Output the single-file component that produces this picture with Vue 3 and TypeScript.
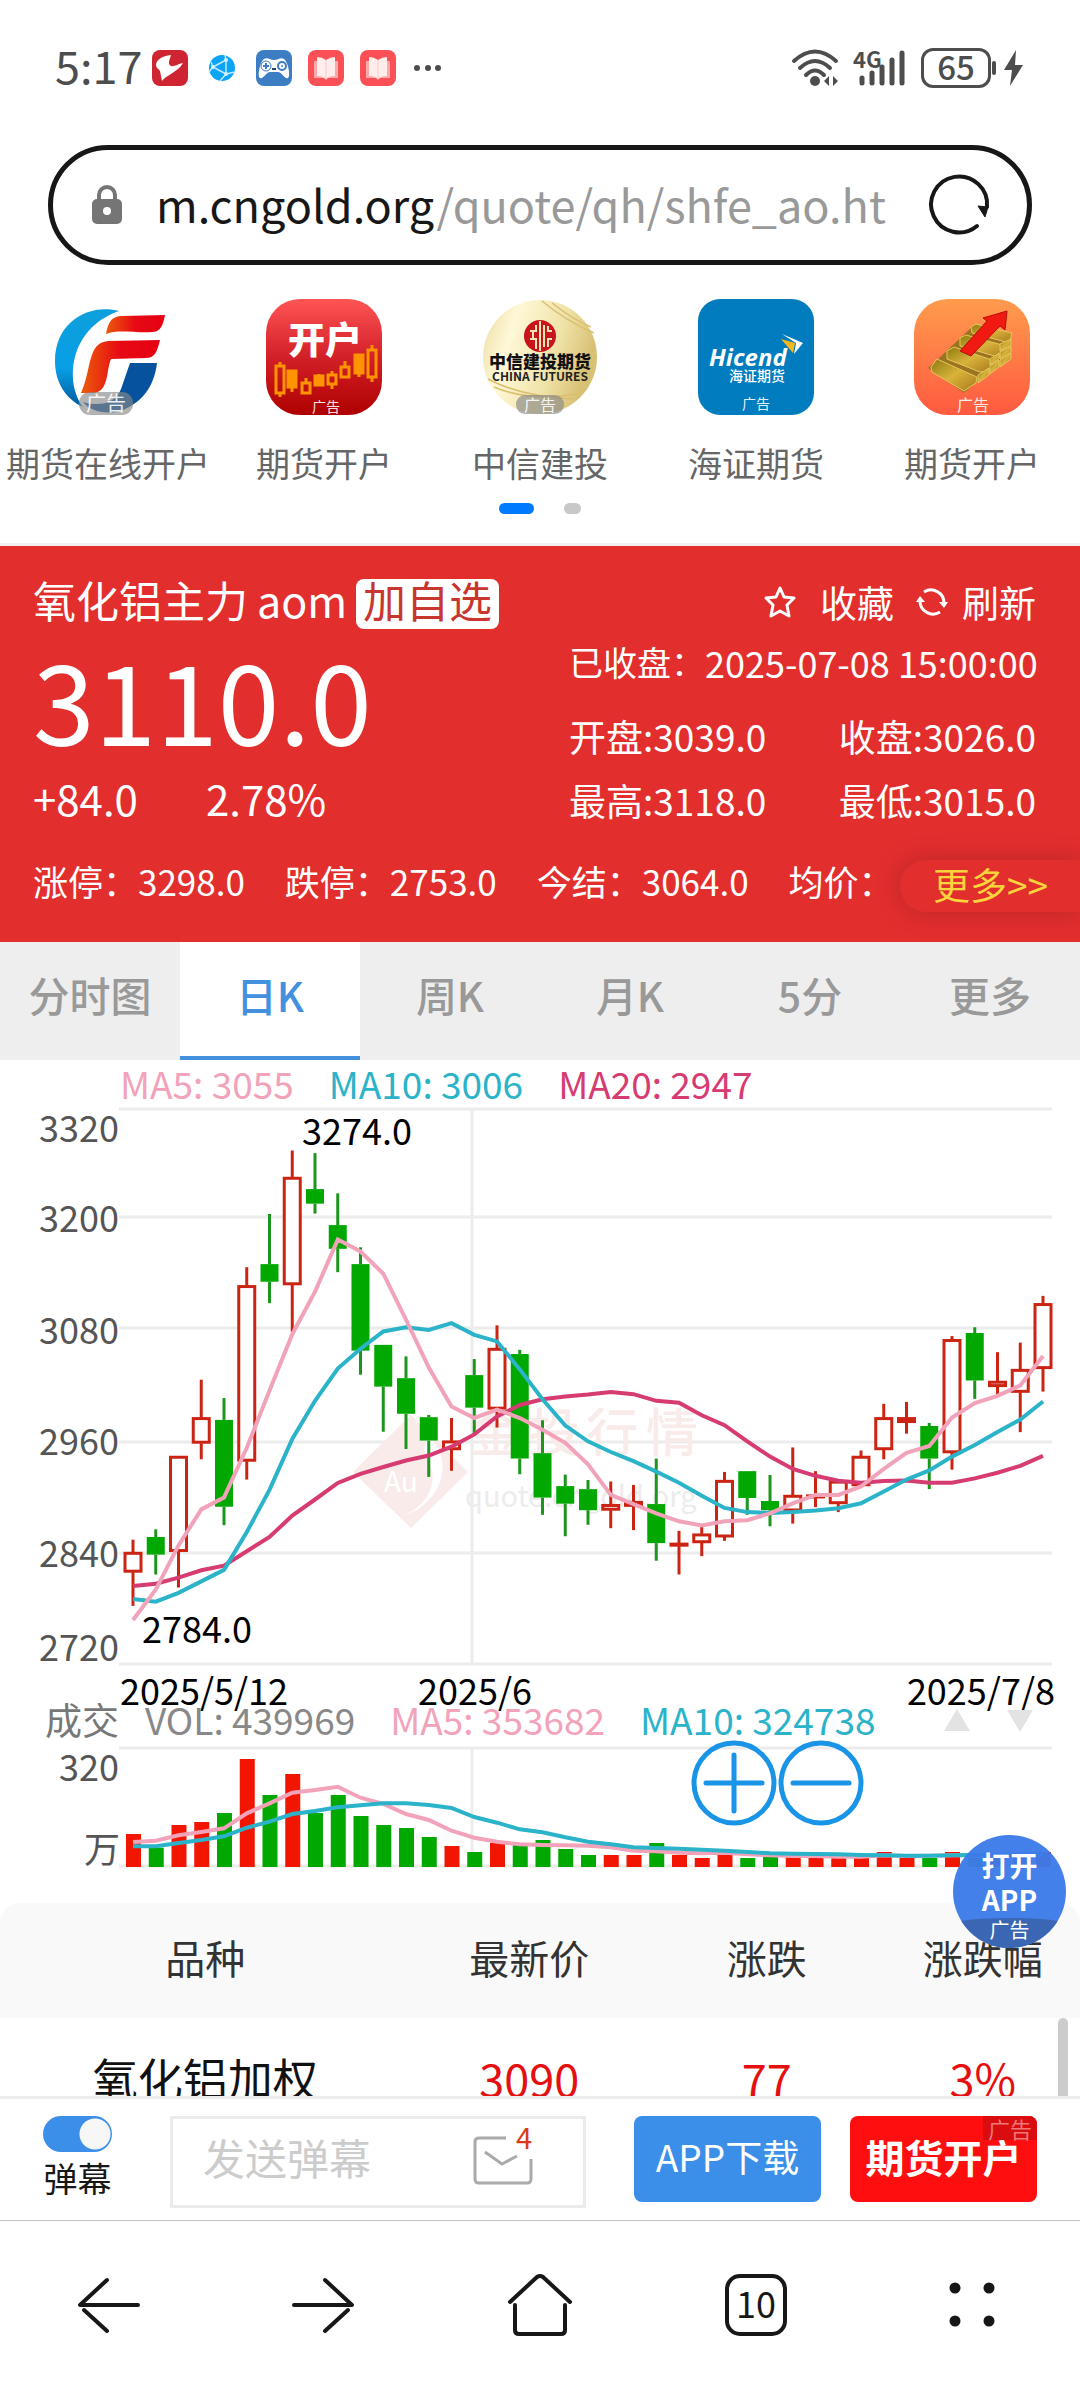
<script setup lang="ts">
import { ref } from 'vue'

type Candle = [kind: 'up' | 'down', high: number, top: number, bottom: number, low: number]

// Chart geometry: every series shares the same horizontal step.
const FIRST_X = 133
const STEP = 22.75
const px = (i: number): number => FIRST_X + STEP * i
const priceY = (v: number): number => v * 0.3827 - 16
const volY = (v: number): number => v / 3 - 86

const candles: Candle[] = [
  ['up', 1175, 1208, 1260, 1348], ['down', 1148, 1168, 1214, 1266], ['up', 957, 957, 1206, 1300],
  ['up', 757, 856, 923, 965], ['down', 805, 862, 1089, 1137], ['up', 463, 511, 970, 1018],
  ['down', 324, 455, 501, 557], ['up', 158, 228, 509, 632], ['down', 165, 259, 297, 323],
  ['down', 270, 353, 415, 476], ['down', 411, 455, 681, 744], ['down', 666, 666, 775, 893],
  ['down', 696, 753, 846, 938], ['down', 849, 855, 916, 1011], ['up', 857, 917, 940, 995],
  ['down', 703, 745, 830, 900], ['up', 615, 675, 834, 882], ['down', 679, 690, 963, 1004],
  ['down', 863, 949, 1065, 1110], ['down', 1005, 1035, 1081, 1166], ['down', 1019, 1043, 1098, 1136],
  ['up', 1023, 1083, 1098, 1145], ['up', 1032, 1075, 1088, 1150], ['down', 963, 1082, 1184, 1230],
  ['up', 1152, 1184, 1192, 1266], ['up', 1140, 1160, 1183, 1218], ['up', 998, 1020, 1168, 1178],
  ['down', 996, 996, 1066, 1110], ['down', 1006, 1074, 1098, 1140], ['up', 934, 1059, 1100, 1133],
  ['up', 996, 1058, 1066, 1090], ['up', 1022, 1022, 1081, 1103], ['up', 942, 957, 1034, 1034],
  ['up', 820, 856, 940, 965], ['up', 815, 856, 869, 898], ['down', 870, 878, 963, 1043],
  ['up', 643, 652, 948, 992], ['down', 620, 635, 759, 807], ['up', 685, 761, 775, 797],
  ['up', 660, 730, 790, 894], ['up', 538, 558, 728, 788],
]

const ma5 = [1385, 1305, 1190, 1096, 1065, 935, 785, 638, 527, 391, 422, 480, 600, 725, 827, 857, 835, 857, 888, 922, 978, 1058, 1082, 1106, 1127, 1138, 1127, 1124, 1106, 1080, 1058, 1058, 1036, 990, 948, 930, 856, 818, 799, 772, 695]
const ma10 = [1330, 1337, 1314, 1284, 1254, 1155, 1045, 912, 812, 728, 676, 631, 620, 627, 609, 640, 657, 730, 808, 877, 918, 946, 970, 997, 1026, 1060, 1092, 1103, 1105, 1103, 1099, 1093, 1080, 1049, 1018, 994, 958, 928, 894, 861, 814]
const ma20 = [1296, 1290, 1274, 1255, 1243, 1205, 1168, 1112, 1070, 1027, 1003, 985, 968, 955, 932, 900, 853, 823, 808, 801, 796, 789, 795, 812, 817, 850, 876, 918, 958, 990, 1008, 1021, 1026, 1022, 1020, 1026, 1026, 1015, 1000, 982, 956]

const volumes = [522, 563, 495, 486, 459, 297, 405, 342, 459, 405, 468, 495, 504, 531, 558, 576, 549, 553, 540, 567, 585, 585, 585, 549, 585, 594, 582, 594, 590, 590, 594, 594, 594, 576, 594, 594, 576, 594, 594, 594, 576]
const volMa5 = [546, 542, 526, 516, 505, 460, 430, 398, 390, 380, 413, 432, 462, 480, 512, 533, 545, 553, 555, 556, 557, 562, 572, 574, 578, 580, 578, 583, 586, 588, 588, 590, 590, 586, 588, 587, 586, 586, 586, 586, 586]
const volMa10 = [559, 559, 549, 540, 529, 503, 485, 462, 453, 442, 436, 430, 430, 435, 444, 471, 488, 508, 517, 532, 545, 553, 562, 564, 566, 569, 572, 576, 580, 581, 582, 583, 585, 586, 587, 587, 586, 585, 584, 584, 583]

const line = (values: number[], y: (v: number) => number): string =>
  values.map((v, i) => `${px(i).toFixed(1)},${y(v).toFixed(1)}`).join(' ')

const priceGrid = [3, 111, 222, 336, 447, 558]
const priceLabels: [string, number][] = [
  ['3320', 36], ['3200', 126], ['3080', 238], ['2960', 349], ['2840', 461], ['2720', 555],
]

const tabs = ['分时图', '日K', '周K', '月K', '5分', '更多']
const activeTab = ref('日K')
const danmu = ref(true)
const message = ref('')

const limits: [string, string][] = [
  ['涨停：', '3298.0'], ['跌停：', '2753.0'], ['今结：', '3064.0'], ['均价：', ''],
]

// Orange candles inside the second advert icon: x, wick top, wick bottom, body top, body bottom, filled
const adCandles: [number, number, number, number, number, boolean][] = [
  [14, 63, 98, 67, 94, false], [26, 72, 93, 72, 88, true], [40, 79, 94, 84, 94, false],
  [53, 75, 86, 77, 86, true], [66, 72, 90, 76, 85, false], [79, 62, 78, 68, 78, false],
  [93, 56, 78, 56, 74, true], [106, 46, 83, 51, 78, false],
]
</script>

<template>
  <div class="screen">
    <div class="status">
      <div class="status-side">
        <span class="clock">5:17</span>
        <svg class="app-ic first" viewBox="0 0 36 36"><rect width="36" height="36" rx="8" fill="#cf2431" /><path d="M19 5 C10 6 4 10 4 15 C4 18 7 19 8 21 L10 31 C13 26 26 22 31 13 C26 14 22 17 19 16 C15 14 18 9 19 5Z" fill="#fff" /></svg>
        <svg class="app-ic" viewBox="0 0 36 36"><circle cx="18" cy="18" r="13" fill="#0ba5f8" /><path d="M9 17 L22 10 M9 17 L22 24 M22 10 V24 M9 17 L5 22 M22 10 L21 5 M22 24 L16 31 M22 24 L31 22 M9 17 L7 12" stroke="#bfe6fb" stroke-width="1.5" fill="none" /><g fill="#d5effc"><circle cx="9" cy="17" r="2" /><circle cx="22" cy="10" r="2" /><circle cx="22" cy="24" r="2" /></g></svg>
        <svg class="app-ic" viewBox="0 0 36 36"><rect width="36" height="36" rx="8" fill="#3c7dc4" /><path d="M8 9 C12 7 13 10 18 10 C23 10 24 7 28 9 C32 12 35 26 32 28 C29 30 26 22 22 22 H14 C10 22 7 30 4 28 C1 26 4 12 8 9Z" fill="#fff" /><path d="M7 16 H13 M10 13 V19" stroke="#3c7dc4" stroke-width="2" /><circle cx="10" cy="16" r="5" fill="none" stroke="#3c7dc4" stroke-width="1" /><circle cx="26" cy="16" r="4" fill="none" stroke="#3c7dc4" stroke-width="2" /><circle cx="26" cy="16" r="1" fill="#3c7dc4" /><path d="M16 19 H20" stroke="#26486e" stroke-width="2" /></svg>
        <svg v-for="n in 2" :key="n" class="app-ic" viewBox="0 0 36 36"><rect width="36" height="36" rx="8" fill="#fb5156" /><path d="M6 11 H30 V28 H20 L18 30 L16 28 H6Z" fill="#fda9aa" /><path d="M9 7 Q14 7 18 10 Q22 7 27 7 V26 Q21 26 18 29 Q15 26 9 26Z" fill="#ffeceb" /><path d="M18 10 V28" stroke="#fbc9c8" stroke-width="1" /></svg>
        <svg class="app-ic" viewBox="0 0 36 36"><g fill="#4d4d4d"><circle cx="5" cy="18" r="3" /><circle cx="16" cy="18" r="3" /><circle cx="26" cy="18" r="3" /></g></svg>
      </div>
      <div class="status-side">
        <svg width="48" height="38" viewBox="0 0 48 38"><g fill="none" stroke="#4d4d4d" stroke-width="4" stroke-linecap="round"><path d="M3 12 Q24 -7 45 12" /><path d="M9 19 Q24 5 39 19" /><path d="M15 26 Q24 17 33 26" /></g><circle cx="24" cy="32" r="5" fill="#4d4d4d" /><path d="M33 32 l5 -5 v10z M47 32 l-5 -5 v10z" fill="#4d4d4d" /></svg>
        <svg class="signal" width="54" height="38" viewBox="0 0 54 38"><text x="0" y="19" class="net">4G</text><g stroke="#4d4d4d" stroke-width="5" stroke-linecap="round"><path d="M9 29 V34" /><path d="M19 24 V34" /><path d="M29 18 V34" /><path d="M39 11 V34" /><path d="M49 4 V34" /></g></svg>
        <span class="battery">65</span>
        <svg width="34" height="38" viewBox="0 0 34 38"><path d="M3 14 V24" stroke="#4d4d4d" stroke-width="4" stroke-linecap="round" /><path d="M25 1 L13 21 H21 L19 37 L32 16 H24Z" fill="#4d4d4d" /></svg>
      </div>
    </div>

    <div class="address">
      <svg width="32" height="40" viewBox="0 0 32 40"><path d="M8 16 V10 A8 8 0 0 1 24 10 V16" fill="none" stroke="#757575" stroke-width="4" /><rect x="1" y="14" width="30" height="25" rx="5" fill="#757575" /><circle cx="16" cy="26" r="4" fill="#fff" /></svg>
      <span class="url">m.cngold.org<i>/quote/qh/shfe_ao.ht</i></span>
      <button class="bare" aria-label="刷新页面">
        <svg width="62" height="62" viewBox="0 0 62 62"><path d="M49 52 A28 28 0 1 1 59 33" fill="none" stroke="#171717" stroke-width="4" stroke-linecap="round" /><path d="M50 32 L60 33 L57 43Z" fill="#171717" stroke="#171717" stroke-width="1" /></svg>
      </button>
    </div>

    <main class="page">
      <nav class="ads">
        <a href="#" class="ad">
          <svg class="ad-ic" viewBox="0 0 116 116">
            <defs>
              <linearGradient id="sw" x1="0" y1="0" x2="0" y2="1"><stop offset="0" stop-color="#0e9fdc" /><stop offset="0.6" stop-color="#089fe6" /><stop offset="1" stop-color="#005a9e" /></linearGradient>
              <linearGradient id="fr" x1="0" y1="0" x2="1" y2="0"><stop offset="0" stop-color="#ec5b0b" /><stop offset="0.5" stop-color="#e60914" /><stop offset="1" stop-color="#e60012" /></linearGradient>
            </defs>
            <path d="M69 12 C40 4 5 22 5 62 C5 84 16 100 33 108 C15 84 18 30 69 12Z" fill="url(#sw)" />
            <path d="M80 64 H107 C104 88 92 104 70 112 C55 116 40 112 33 103 C50 108 66 104 71 90Z" fill="#06529f" />
            <path d="M56 35 C58 23 62 17 72 17 L115 16 C113 27 110 33 102 33 C84 34 68 30 56 35Z" fill="url(#fr)" />
            <path d="M31 94 C42 70 37 44 58 42 L110 41 C107 54 104 59 96 59 L61 60 C56 72 59 92 44 94Z" fill="url(#fr)" />
            <rect x="29" y="93" width="54" height="23" rx="11" class="badge" />
            <text x="56" y="112" class="adtag big">广告</text>
          </svg>
          <span>期货在线开户</span>
        </a>
        <a href="#" class="ad">
          <svg class="ad-ic" viewBox="0 0 116 116">
            <defs><linearGradient id="kr" x1="0" y1="0" x2="0" y2="1"><stop offset="0" stop-color="#ff5555" /><stop offset="0.5" stop-color="#d22028" /><stop offset="1" stop-color="#ae0000" /></linearGradient></defs>
            <rect width="116" height="116" rx="34" fill="url(#kr)" />
            <text x="59" y="55" class="kh">开户</text>
            <g v-for="c in adCandles" :key="c[0]" stroke="#ff9400" stroke-width="3">
              <line :x1="c[0]" :x2="c[0]" :y1="c[1]" :y2="c[3]" /><line :x1="c[0]" :x2="c[0]" :y1="c[4]" :y2="c[2]" />
              <rect :x="c[0] - 4" width="8" :y="c[3]" :height="c[4] - c[3]" :fill="c[5] ? '#ff9400' : 'none'" />
            </g>
            <text x="60" y="113" class="adtag">广告</text>
          </svg>
          <span>期货开户</span>
        </a>
        <a href="#" class="ad">
          <svg class="ad-ic" viewBox="0 0 116 116">
            <defs><linearGradient id="gd" x1="0" y1="0" x2="1" y2="0.3"><stop offset="0" stop-color="#e9dca0" /><stop offset="0.3" stop-color="#fff8d8" /><stop offset="0.7" stop-color="#f0e3a8" /><stop offset="1" stop-color="#d8c175" /></linearGradient></defs>
            <circle cx="58" cy="58" r="57" fill="url(#gd)" />
            <path d="M60 2 Q84 22 112 34 M70 4 Q90 20 109 28 M6 80 Q40 98 92 100 M12 88 Q50 104 100 94" fill="none" stroke="#d9bf70" stroke-width="1.5" />
            <circle cx="58" cy="37" r="16" fill="#c8151c" />
            <path d="M48 32 H54 V26 M48 40 H54 V50 M51 32 V40 M58 22 V52 M62 26 V48 M66 27 V32 H70 M66 48 V40 H70" fill="none" stroke="#f6e4b4" stroke-width="2" />
            <text x="58" y="69" class="zx">中信建投期货</text>
            <text x="58" y="82" class="cf">CHINA FUTURES</text>
            <rect x="34" y="96" width="48" height="19" rx="9" class="badge" />
            <text x="58" y="112" class="adtag mid">广告</text>
          </svg>
          <span>中信建投</span>
        </a>
        <a href="#" class="ad">
          <svg class="ad-ic" viewBox="0 0 116 116">
            <rect width="116" height="116" rx="22" fill="#007cbf" />
            <text x="11" y="67" class="hc">Hicend</text>
            <path d="M84 35 L105 44 L96 55 L98 44Z" fill="#fff" /><path d="M83 40 L97 44 L95 54Z" fill="#f5b81c" />
            <text x="59" y="82" class="hz">海证期货</text>
            <text x="58" y="110" class="adtag">广告</text>
          </svg>
          <span>海证期货</span>
        </a>
        <a href="#" class="ad">
          <svg class="ad-ic" viewBox="0 0 116 116">
            <defs>
              <linearGradient id="og" x1="0" y1="0" x2="0" y2="1"><stop offset="0" stop-color="#ff9c4d" /><stop offset="1" stop-color="#ff5a40" /></linearGradient>
              <linearGradient id="au" x1="0" y1="0" x2="1" y2="1"><stop offset="0" stop-color="#8d7a10" /><stop offset="0.5" stop-color="#d9b23a" /><stop offset="1" stop-color="#a87a1e" /></linearGradient>
            </defs>
            <rect width="116" height="116" rx="34" fill="url(#og)" />
            <path d="M14 69 L50 94 L64 82 L96 58 V34 L60 26 L22 62Z" fill="#9c7421" />
            <g fill="url(#au)" stroke="#e6c75c" stroke-width="1">
              <path d="M57 28 L62 25 L98 34 L96 42 L92 43 L58 34Z" /><path d="M46 39 L52 36 L92 47 L88 56 L84 58 L46 47Z" />
              <path d="M33 52 L40 48 L78 61 L76 72 L66 73 L33 60Z" /><path d="M17 68 L23 60 L63 78 L62 84 L50 92 L18 73Z" />
              <path d="M86 45 L97 40 V46 L86 52Z" /><path d="M86 53 L97 47 V53 L86 60Z" /><path d="M86 61 L97 54 V60 L86 68Z" />
              <path d="M76 60 L85 54 V60 L76 66Z" /><path d="M76 67 L85 61 V68 L76 75Z" /><path d="M64 76 L75 69 V76 L64 84Z" />
            </g>
            <path d="M46 52 L73 22 L69 19 L93 12 L91 31 L86 27 L57 57Z" fill="#f01a12" stroke="#b80d08" stroke-width="1" />
            <text x="59" y="112" class="adtag mid">广告</text>
          </svg>
          <span>期货开户</span>
        </a>
      </nav>
      <div class="pager"><i class="on"></i><i></i></div>

      <section class="quote">
        <div class="quote-top">
          <div class="q-left">
            <h1>氧化铝主力 <span>aom</span><button class="add">加自选</button></h1>
            <div class="price">3110.0</div>
            <div class="change"><span>+84.0</span><span>2.78%</span></div>
          </div>
          <div class="q-right">
            <div class="tools">
              <button class="bare">
                <svg width="36" height="34" viewBox="0 0 36 34"><path d="M18 3 L22 12 L32 13 L25 20 L27 31 L18 26 L9 31 L11 20 L4 13 L14 12Z" fill="none" stroke="#fff" stroke-width="3" stroke-linejoin="round" /></svg>
                收藏
              </button>
              <button class="bare reload">
                <svg width="32" height="32" viewBox="0 0 32 32"><g fill="none" stroke="#fff" stroke-width="3"><path d="M8 6 A13 13 0 0 1 28 17" /><path d="M24 26 A13 13 0 0 1 4 15" /></g><path d="M23 16 H32 L28 22Z M0 16 H9 L4 10Z" fill="#fff" /></svg>
                刷新
              </button>
            </div>
            <div class="closed">已收盘：<time>2025-07-08 15:00:00</time></div>
            <div class="pair open"><span>开盘:3039.0</span><span>收盘:3026.0</span></div>
            <div class="pair"><span>最高:3118.0</span><span>最低:3015.0</span></div>
          </div>
        </div>
        <div class="limits">
          <span v-for="l in limits" :key="l[0]">{{ l[0] }}{{ l[1] }}</span>
          <button class="more">更多&gt;&gt;</button>
        </div>
      </section>

      <div class="tabs">
        <button v-for="t in tabs" :key="t" :class="{ active: t === activeTab }" @click="activeTab = t">{{ t }}</button>
      </div>

      <section class="charts">
        <div class="legend"><span class="c5">MA5: 3055</span><span class="c10">MA10: 3006</span><span class="c20">MA20: 2947</span></div>
        <svg class="chart" viewBox="0 0 1080 599">
          <g stroke="#ececec" stroke-width="3">
            <line v-for="y in priceGrid" :key="y" x1="119" x2="1052" :y1="y" :y2="y" />
            <line x1="472" x2="472" y1="3" y2="558" />
          </g>
          <g>
            <path d="M411 309 L468 366 L411 422 L353 366Z" fill="#f9ebe9" />
            <path d="M428 330 C454 352 445 395 404 410 C434 395 440 370 424 344Z" fill="#fff" />
            <text x="384" y="386" class="wm-au">Au</text>
            <text x="470 528 586 646" y="346" class="wm-cn">金投行情</text>
            <text x="465" y="401" class="wm-en">quote.cngold.org</text>
          </g>
          <g v-for="(c, i) in candles" :key="i" :class="c[0]">
            <line :x1="px(i)" :x2="px(i)" :y1="priceY(c[1])" :y2="priceY(c[2])" />
            <line :x1="px(i)" :x2="px(i)" :y1="priceY(c[3])" :y2="priceY(c[4])" />
            <rect :x="px(i) - 8" width="16" :y="priceY(c[2]) + 1" :height="Math.max(priceY(c[3]) - priceY(c[2]) - 2, 1)" />
          </g>
          <polyline class="l20" :points="line(ma20, priceY)" />
          <polyline class="l10" :points="line(ma10, priceY)" />
          <polyline class="l5" :points="line(ma5, priceY)" />
          <g class="axis"><text v-for="l in priceLabels" :key="l[0]" x="119" :y="l[1]">{{ l[0] }}</text></g>
          <g class="mark">
            <text x="302" y="39">3274.0</text><text x="142" y="537">2784.0</text>
            <text x="120" y="599">2025/5/12</text><text x="418" y="599">2025/6</text><text x="1055" y="599" class="end">2025/7/8</text>
          </g>
        </svg>
        <div class="vol-legend">
          <span class="deal">成交</span><span class="vol">VOL: 439969</span><span class="c5">MA5: 353682</span><span class="c10">MA10: 324738</span>
          <svg width="90" height="24" viewBox="0 0 90 24"><path d="M13 0 L26 22 H0Z M63 1 H89 L76 23Z" fill="#e3e3e3" /></svg>
        </div>
        <div class="vol-area">
          <svg class="chart" viewBox="0 0 1080 157">
            <g stroke="#ececec" stroke-width="3"><line x1="119" x2="1052" y1="2" y2="2" /><line x1="119" x2="1052" y1="120" y2="120" /><line x1="472" x2="472" y1="2" y2="120" /></g>
            <rect v-for="(v, i) in volumes" :key="i" :x="px(i) - 7" width="15" :y="volY(v)" :height="121 - volY(v)" :fill="candles[i][0] === 'up' ? '#f21500' : '#00a800'" />
            <polyline class="l5" :points="line(volMa5, volY)" />
            <polyline class="l10" :points="line(volMa10, volY)" />
            <g class="axis"><text x="119" y="35">320</text><text x="120" y="117">万</text></g>
          </svg>
          <div class="zoom">
            <button class="bare" aria-label="放大"><svg viewBox="0 0 86 86"><circle cx="43" cy="43" r="40" /><path d="M15 43 H71 M43 15 V71" /></svg></button>
            <button class="bare" aria-label="缩小"><svg viewBox="0 0 86 86"><circle cx="43" cy="43" r="40" /><path d="M15 43 H71" /></svg></button>
          </div>
          <a href="#" class="open-app"><b>打开<br />APP</b><small>广告</small></a>
        </div>
      </section>

      <div class="list">
        <table>
          <thead><tr><th class="name">品种</th><th>最新价</th><th>涨跌</th><th class="pct">涨跌幅</th></tr></thead>
          <tbody><tr><td>氧化铝加权</td><td class="red">3090</td><td class="red">77</td><td class="red">3%</td></tr></tbody>
        </table>
        <i class="thumb"></i>
      </div>
    </main>

    <div class="danmu">
      <label class="switch"><input v-model="danmu" type="checkbox" />弹幕</label>
      <div class="field">
        <input v-model="message" type="text" placeholder="发送弹幕" aria-label="发送弹幕" />
        <svg width="62" height="64" viewBox="0 0 62 64"><path d="M33 16 H6 Q2 16 2 20 V57 Q2 61 6 61 H54 Q58 61 58 57 V37" fill="none" stroke="#aaa" stroke-width="3" /><path d="M12 30 L29 42 L44 34" fill="none" stroke="#aaa" stroke-width="3" /><text x="43" y="27" class="count">4</text></svg>
      </div>
      <button class="cta blue">APP下载</button>
      <button class="cta hot">期货开户<small>广告</small></button>
    </div>

    <nav class="browser">
      <button class="bare" aria-label="后退"><svg width="64" height="64" viewBox="0 0 64 64"><path d="M31 7 L4 32 H62 M8 37 L31 58" /></svg></button>
      <button class="bare" aria-label="前进"><svg width="64" height="64" viewBox="0 0 64 64"><path d="M33 7 L60 32 H2 M56 37 L33 58" /></svg></button>
      <button class="bare" aria-label="主页"><svg width="68" height="66" viewBox="0 0 68 66"><path d="M4 30 L31 5 Q34 3 37 5 L64 30 M9 33 V58 Q9 62 13 62 H55 Q59 62 59 58 V33" /></svg></button>
      <button class="bare" aria-label="标签页"><span class="count-box">10</span></button>
      <button class="bare" aria-label="菜单"><svg width="64" height="64" viewBox="0 0 64 64"><g class="dots"><circle cx="15" cy="15" r="5.5" /><circle cx="49" cy="15" r="5.5" /><circle cx="15" cy="48" r="5.5" /><circle cx="49" cy="48" r="5.5" /></g></svg></button>
    </nav>
  </div>
</template>

<style>
body {
  margin: 0;
  background: #fff;
}
</style>

<style scoped>
.screen {
  display: flex;
  flex-direction: column;
  height: 100vh;
  overflow: hidden;
  font-family: "Noto Sans CJK SC", "Noto Sans", sans-serif;
  color: #171717;
}
.screen * { box-sizing: border-box; }
button { font-family: inherit; cursor: pointer; margin: 0; }
a { color: inherit; text-decoration: none; }
svg { display: block; flex: none; overflow: visible; }
.bare {
  display: flex;
  align-items: center;
  justify-content: center;
  padding: 0;
  border: 0;
  background: none;
  color: inherit;
  font-size: inherit;
  line-height: inherit;
}

.status {
  display: flex;
  flex: none;
  justify-content: space-between;
  padding: 45px 55px 0 55px;
  height: 145px;
  color: #4d4d4d;
}
.status-side { display: flex; align-items: center; height: 46px; }
.clock { font-size: 45px; line-height: 38px; padding-bottom: 6px; }
.app-ic { width: 36px; height: 36px; margin-right: 16px; }
.app-ic.first { margin-left: 10px; }
.signal { margin: 0 14px; }
.net { font-size: 22px; font-weight: 700; fill: #4d4d4d; }
.battery {
  display: block;
  width: 70px;
  height: 40px;
  border: 3px solid #4d4d4d;
  border-radius: 12px;
  font-size: 33px;
  font-weight: 500;
  line-height: 30px;
  text-align: center;
}

.address {
  display: flex;
  flex: none;
  align-items: center;
  height: 120px;
  margin: 0 48px;
  padding: 0 37px 0 38px;
  border: 5px solid #171717;
  border-radius: 60px;
}
.url {
  flex: 1;
  margin: 0 40px 0 33px;
  padding-bottom: 2px;
  overflow: hidden;
  white-space: nowrap;
  font-size: 45px;
  line-height: 64px;
}
.url i { font-style: normal; color: #999; }

.page { flex: 1; min-height: 0; overflow: hidden; }
.ads { display: flex; padding-top: 34px; }
.ad {
  flex: 1;
  display: flex;
  flex-direction: column;
  align-items: center;
  gap: 28px;
  font-size: 34px;
  line-height: 40px;
  white-space: nowrap;
  color: #666;
}
.ad-ic { width: 116px; height: 116px; }
.badge { fill: #888; fill-opacity: 0.65; }
.adtag { font-size: 14px; fill: #fff; fill-opacity: 0.9; text-anchor: middle; }
.adtag.mid { font-size: 16px; }
.adtag.big { font-size: 20px; }
.kh { font-size: 37px; font-weight: 900; fill: #fff; text-anchor: middle; }
.zx { font-size: 17px; font-weight: 900; fill: #111; text-anchor: middle; }
.cf { font-size: 12px; font-weight: 700; fill: #222; text-anchor: middle; }
.hc { font-family: "Open Sans", "Noto Sans", sans-serif; font-size: 24px; font-weight: 700; font-style: italic; fill: #fff; }
.hz { font-size: 14px; font-weight: 500; fill: #fff; text-anchor: middle; }
.pager {
  display: flex;
  justify-content: center;
  gap: 30px;
  padding: 20px 0 29px;
  border-bottom: 3px solid #f2f0f0;
}
.pager i { width: 17px; height: 11px; border-radius: 6px; background: #c8c8c8; }
.pager .on { width: 35px; background: #007aff; }

.quote {
  padding: 33px 0 39px;
  background: #e32e2e;
  color: #fff;
}
.quote-top { display: flex; justify-content: space-between; padding: 0 44px 0 33px; }
h1 {
  display: flex;
  gap: 9px;
  margin: 0;
  font-size: 43px;
  font-weight: 400;
  line-height: 40px;
  white-space: nowrap;
}
.add {
  height: 50px;
  padding: 0 7px 10px;
  border: 0;
  border-radius: 8px;
  background: #fff;
  color: #c9352f;
  font-size: 43px;
  line-height: 40px;
}
.price { margin-top: 13px; font-size: 111px; line-height: 112px; }
.change { display: flex; gap: 68px; margin-top: 20px; font-size: 42px; line-height: 48px; }
.q-right { width: 467px; padding-top: 1px; font-size: 37px; line-height: 44px; white-space: nowrap; }
.tools { display: flex; justify-content: flex-end; gap: 22px; }
.tools .bare { gap: 22px; }
.tools .reload { gap: 14px; }
.closed { display: flex; justify-content: space-between; margin-top: 16px; font-size: 34px; }
.closed time { font-size: 36px; }
.pair { display: flex; justify-content: space-between; margin-top: 20px; }
.pair.open { margin-top: 30px; }
.limits {
  position: relative;
  display: flex;
  gap: 40px;
  margin-top: 37px;
  padding-left: 33px;
  font-size: 35px;
  line-height: 44px;
  white-space: nowrap;
}
.more {
  position: absolute;
  right: 0;
  top: 1px;
  height: 52px;
  padding: 0 32px 4px 33px;
  border: 0;
  border-radius: 26px 0 0 26px;
  background: #e32e2e;
  box-shadow: 0 0 24px rgba(90, 20, 20, 0.3);
  color: #fbd43c;
  font-size: 37px;
  line-height: 48px;
}

.tabs { display: flex; height: 118px; background: #eee; }
.tabs button {
  flex: 1;
  padding: 0 0 14px;
  border: 0;
  background: none;
  color: #999;
  font-size: 41px;
  font-weight: 500;
  line-height: 60px;
}
.tabs .active { padding-bottom: 10px; border-bottom: 4px solid #4290de; background: #fff; color: #4290de; }

.legend { display: flex; gap: 35px; padding-left: 120px; font-size: 37px; line-height: 46px; }
.c5 { color: #f2a3b9; }
.c10 { color: #2bb3c9; }
.c20 { color: #d63b72; }
.chart { width: 100%; height: auto; }
.chart text { font-size: 36px; }
.chart .wm-au { font-size: 28px; fill: #fff; }
.chart .wm-cn { font-size: 52px; fill: #f9ebe9; font-weight: 500; }
.chart .wm-en { font-size: 29px; fill: #ececec; }
.up line { stroke: #cb2413; stroke-width: 3; }
.up rect { fill: #fff; stroke: #cb2413; stroke-width: 3; }
.down line { stroke: #1c951c; stroke-width: 3; }
.down rect { fill: #00a800; stroke: #00a800; stroke-width: 2; }
polyline { fill: none; stroke-width: 4; }
.l5 { stroke: #f2a3b9; }
.l10 { stroke: #2bb3c9; }
.l20 { stroke: #d63b72; }
.axis text { fill: #555; text-anchor: end; }
.mark text { fill: #000; }
.mark .end { text-anchor: end; }
.vol-legend {
  display: flex;
  gap: 35px;
  padding: 0 46px 13px 45px;
  font-size: 37px;
  line-height: 28px;
  white-space: nowrap;
}
.vol-legend .deal { margin-right: -9px; color: #777; }
.vol-legend .vol { color: #888; }
.vol-legend svg { margin: 4px 0 0 auto; }
.vol-area { position: relative; }
.zoom { position: absolute; right: 20%; top: -6px; display: flex; gap: 1px; }
.zoom svg { width: 86px; height: 86px; fill: none; stroke: #1a94e6; stroke-width: 5; stroke-linecap: round; }
.open-app {
  position: absolute;
  right: 14px;
  top: 89px;
  z-index: 2;
  display: flex;
  flex-direction: column;
  align-items: center;
  width: 113px;
  height: 113px;
  padding-top: 13px;
  overflow: hidden;
  border-radius: 50%;
  background: rgba(60, 123, 232, 0.96);
  color: #fff;
  text-align: center;
}
.open-app b { font-size: 28px; font-weight: 700; line-height: 34px; }
.open-app small { width: 100%; margin-top: 2px; height: 32px; border-radius: 50% 50% 0 0 / 6px 6px 0 0; background: #3a66b3; font-size: 20px; line-height: 24px; }

.list { position: relative; }
table { width: 100%; border-collapse: collapse; table-layout: fixed; text-align: center; }
thead tr { background: #f9f9f9; }
th { height: 115px; padding: 0 0 8px; color: #333; font-size: 40px; font-weight: 400; line-height: 56px; width: 22%; }
th.name { width: 38%; border-radius: 20px 0 0 0; }
th.pct { width: 18%; border-radius: 0 20px 0 0; }
td { height: 120px; padding: 0; font-size: 45px; line-height: 60px; color: #111; }
.red { color: #e50f0f; }
.thumb { position: absolute; top: 115px; right: 12px; bottom: 0; width: 10px; border-radius: 5px; background: #ccc; }

.danmu {
  display: flex;
  flex: none;
  align-items: flex-start;
  height: 125px;
  padding: 17px 43px 0;
  border-top: 3px solid #ededed;
  border-bottom: 1px solid #c4c4c4;
  background: #fff;
}
.switch {
  display: flex;
  flex-direction: column;
  align-items: center;
  gap: 6px;
  width: 69px;
  font-size: 34px;
  line-height: 40px;
}
.switch input {
  appearance: none;
  width: 69px;
  height: 36px;
  margin: 0;
  border-radius: 18px;
  background: radial-gradient(circle at 52px 18px, #f7f7f7 15px, #3b8fe8 16px);
}
.field {
  display: flex;
  align-items: flex-start;
  flex: 1;
  height: 92px;
  margin: 0 48px 0 58px;
  padding: 3px 48px 0 30px;
  border: 3px solid #ebebeb;
}
.field input {
  flex: 1;
  width: 100%;
  min-width: 0;
  padding: 0;
  border: 0;
  outline: 0;
  background: none;
  font-family: inherit;
  font-size: 42px;
  line-height: 64px;
  height: 68px;
}
.field input::placeholder { color: #ccc; opacity: 1; }
.count { font-size: 29px; fill: #d83b1a; }
.cta {
  position: relative;
  width: 187px;
  height: 86px;
  padding: 0 0 6px;
  overflow: hidden;
  border: 0;
  border-radius: 8px;
  color: #fff;
  font-size: 37px;
  line-height: 60px;
  white-space: nowrap;
}
.cta.blue { background: #3b8fe8; }
.cta.hot { margin-left: 29px; background: #fe0e0e; font-size: 39px; font-weight: 700; }
.cta small {
  position: absolute;
  top: 0;
  right: 0;
  width: 54px;
  background: #d90c10;
  color: #ee7777;
  font-size: 22px;
  font-weight: 400;
  line-height: 24px;
}

.browser { display: flex; flex: none; align-items: center; height: 167px; }
.browser .bare { flex: 1; }
.browser svg { fill: none; stroke: #171717; stroke-width: 4; stroke-linecap: round; stroke-linejoin: round; }
.browser .dots { fill: #171717; stroke: none; }
.count-box {
  width: 62px;
  height: 62px;
  border: 4px solid #171717;
  border-radius: 15px;
  font-size: 36px;
  line-height: 48px;
}
</style>
